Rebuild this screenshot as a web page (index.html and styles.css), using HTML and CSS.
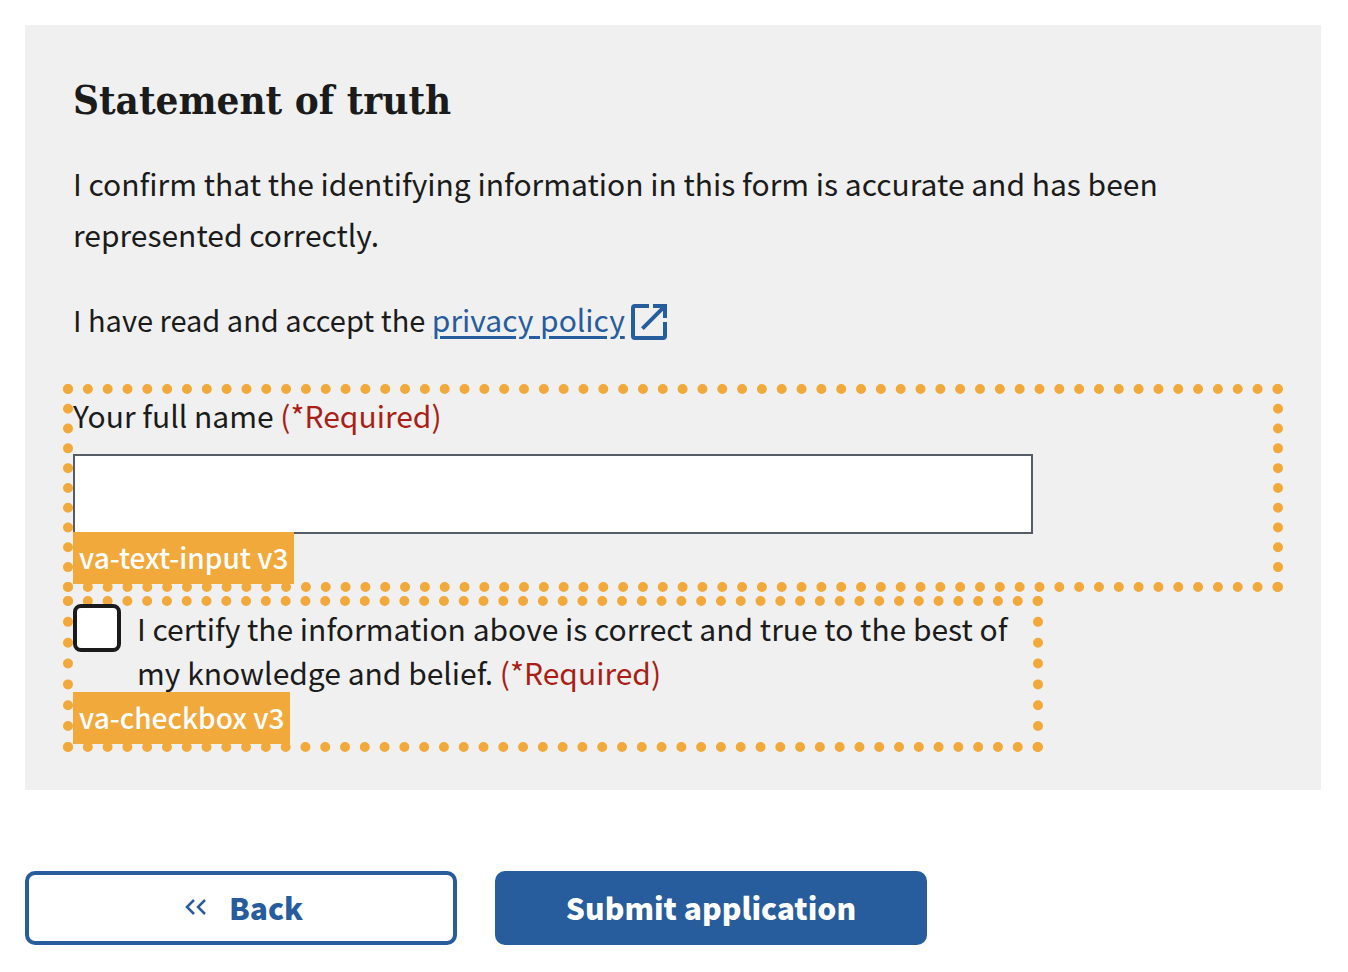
FILE: index.html
```html
<!DOCTYPE html>
<html lang="en">
<head>
<meta charset="utf-8">
<title>Statement of truth</title>
<meta name="viewport" content="width=device-width, initial-scale=1">
<link rel="stylesheet" href="styles.css">
</head>
<body>
<form class="page">
  <section class="panel">
    <h1 class="title">Statement of truth</h1>
    <p class="text">I confirm that the identifying information in this form is accurate and has been represented correctly.</p>
    <p class="text text-policy">I have read and accept the <a class="link" href="#privacy">privacy policy<svg class="external" viewBox="0 0 36 36" aria-hidden="true"><path d="M18 2H4Q2 2 2 4V32Q2 34 4 34H32Q34 34 34 32V18" fill="none" stroke="currentColor" stroke-width="4"/><path d="M22 0H36V14H32V6.800L12.800 26L10 23.200L29.200 4H22Z" fill="currentColor"/></svg></a></p>
    <div class="component component-input">
      <label class="label" for="full-name">Your full name <span class="required">(*Required)</span></label>
      <input class="input" id="full-name" type="text" required>
      <span class="badge">va-text-input v3</span>
    </div>
    <div class="component component-checkbox">
      <input class="checkbox" id="certify" type="checkbox" required>
      <label class="checkbox-label" for="certify">I certify the information above is correct and true to the best of my knowledge and belief. <span class="required">(*Required)</span></label>
      <span class="badge">va-checkbox v3</span>
    </div>
  </section>
  <div class="actions">
    <button class="button button-back" type="button"><svg class="chevrons" viewBox="0 0 22 18" aria-hidden="true"><path d="M9 2L2 9L9 16M20 2L13 9L20 16" fill="none" stroke="currentColor" stroke-width="2.500"/></svg>Back</button>
    <button class="button button-submit" type="submit">Submit application</button>
  </div>
</form>
</body>
</html>
```
FILE: styles.css
```css
* {
  box-sizing: border-box;
}

body {
  margin: 0;
  background: #fff;
  color: #1b1b1b;
  font-family: "Noto Sans CJK JP", "Noto Sans", sans-serif;
  font-size: 30px;
  line-height: 51px;
}

.page {
  padding: 25px 27px 27px 25px;
}

.panel {
  padding: 48px;
  background: #f0f0f0;
}

.title {
  margin: 0 0 31px;
  font-family: "DejaVu Serif Condensed", "DejaVu Serif", serif;
  font-size: 40px;
  font-weight: bold;
  line-height: 54px;
}

.text {
  margin: 0 0 34px;
}

.text-policy {
  font-size: 29px;
}

.link {
  color: #275c9d;
  font-size: 30px;
  text-decoration: underline;
  text-decoration-thickness: 3px;
  text-underline-offset: 4px;
}

.external {
  width: 36px;
  height: 36px;
  margin-left: 6px;
  vertical-align: -8px;
}

.component {
  position: relative;
  outline: 10px dotted #f2a93b;
}

.component-input {
  margin-top: 49px;
  padding-bottom: 48px;
}

.label {
  display: block;
  padding-bottom: 18px;
  line-height: 42px;
}

.required {
  color: #a91f17;
}

.input {
  display: block;
  width: 80%;
  height: 80px;
  padding: 0 16px;
  border: 2px solid #565c65;
  border-radius: 0;
  background: #fff;
  font: inherit;
}

.badge {
  position: absolute;
  bottom: -2px;
  left: 0;
  padding: 0 6px 2px;
  background: #f2a93b;
  color: #fff;
  font-size: 28px;
  font-weight: 500;
  line-height: 50px;
}

.component-checkbox {
  display: flex;
  gap: 16px;
  width: 80%;
  margin-top: 24px;
  padding-bottom: 48px;
}

.checkbox {
  position: relative;
  flex: none;
  width: 48px;
  height: 48px;
  margin: -2px 0 0;
  border: 4px solid #1b1b1b;
  border-radius: 8px;
  background: #fff;
  appearance: none;
}

.checkbox:checked {
  background: #275c9d;
}

.checkbox-label {
  line-height: 44px;
}

.actions {
  display: flex;
  gap: 38px;
  margin-top: 81px;
}

.button {
  display: flex;
  align-items: center;
  justify-content: center;
  gap: 22px;
  width: 432px;
  height: 74px;
  padding: 0 0 2px;
  border: 4px solid #275c9d;
  border-radius: 10px;
  font: inherit;
  font-weight: 900;
}

.button-back {
  padding-left: 6px;
  background: #fff;
  color: #275c9d;
}

.button-submit {
  background: #275c9d;
  color: #fff;
}

.chevrons {
  width: 22px;
  height: 18px;
}
```
